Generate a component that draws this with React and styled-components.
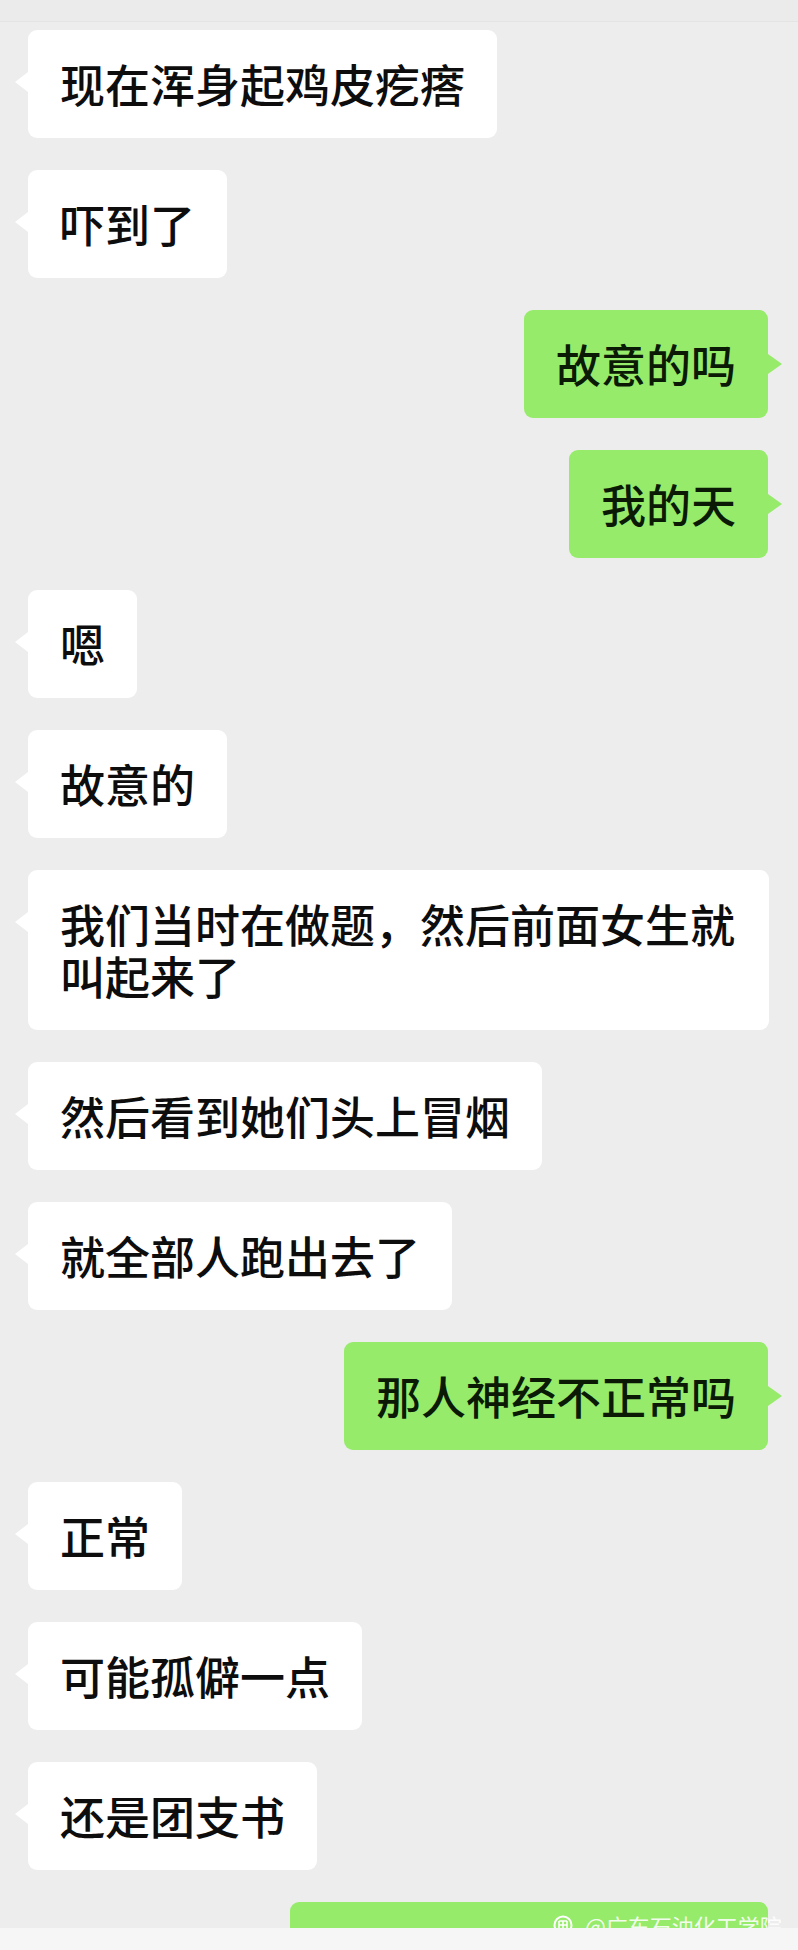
import React from "react"
import styled, { createGlobalStyle } from "styled-components"

const messages = [
  { from: "them", text: "现在浑身起鸡皮疙瘩" },
  { from: "them", text: "吓到了" },
  { from: "me", text: "故意的吗" },
  { from: "me", text: "我的天" },
  { from: "them", text: "嗯" },
  { from: "them", text: "故意的" },
  { from: "them", text: "我们当时在做题，然后前面女生就叫起来了" },
  { from: "them", text: "然后看到她们头上冒烟" },
  { from: "them", text: "就全部人跑出去了" },
  { from: "me", text: "那人神经不正常吗" },
  { from: "them", text: "正常" },
  { from: "them", text: "可能孤僻一点" },
  { from: "them", text: "还是团支书" },
]

const App = () => {
  return (
    <>
      <GlobalStyle />
      <Screen>
        <TopStrip />
        <ChatArea>
          {messages.map((m, i) => (
            <Row key={i} $me={m.from === "me"}>
              <Bubble $me={m.from === "me"}>{m.text}</Bubble>
            </Row>
          ))}
          <Row $me>
            <Bubble $me $width={478}>&nbsp;</Bubble>
          </Row>
          <Watermark>
            <WatermarkIcon width="20" height="20" viewBox="0 0 20 20">
              <rect x="1.5" y="1.5" width="17" height="17" rx="8.5" fill="none" stroke="#fff" strokeWidth="2" />
              <path d="M6 6h8M6 6v9M10 6v9M14 6v9M6 10h8" stroke="#fff" strokeWidth="1.6" fill="none" />
            </WatermarkIcon>
            <span>@广东石油化工学院</span>
          </Watermark>
        </ChatArea>
        <BottomBar />
      </Screen>
    </>
  )
}

export default App

const GlobalStyle = createGlobalStyle`
  html, body {
    margin: 0;
    padding: 0;
    background: #ededed;
  }
`

const Screen = styled.div`
  width: 798px;
  height: 1950px;
  display: flex;
  flex-direction: column;
  background: #ededed;
  font-family: "Noto Sans CJK SC", "Noto Sans", sans-serif;
  overflow: hidden;
`

const TopStrip = styled.div`
  flex: 0 0 21px;
  background: #ebebeb;
  border-bottom: 1px solid #e4e4e4;
`

const ChatArea = styled.div`
  position: relative;
  flex: 1;
  overflow: hidden;
  display: flex;
  flex-direction: column;
  gap: 32px;
  padding: 8px 30px 0 28px;
`

const Row = styled.div`
  display: flex;
  justify-content: ${p => (p.$me ? "flex-end" : "flex-start")};
`

const Bubble = styled.div`
  position: relative;
  box-sizing: border-box;
  max-width: 741px;
  width: ${p => (p.$width ? `${p.$width}px` : "auto")};
  flex-shrink: 0;
  padding: 28px 32px;
  border-radius: 9px;
  background: ${p => (p.$me ? "#96eb6b" : "#ffffff")};
  color: ${p => (p.$me ? "#0a1a05" : "#0d0d0d")};
  font-size: 45px;
  font-weight: 500;
  line-height: 52px;

  &::before {
    content: "";
    position: absolute;
    top: ${p => (p.$me ? "44px" : "42px")};
    ${p => (p.$me ? "right: -14px;" : "left: -13px;")}
    border-top: 10px solid transparent;
    border-bottom: 10px solid transparent;
    ${p =>
      p.$me
        ? "border-left: 14px solid #96eb6b;"
        : "border-right: 13px solid #ffffff;"}
  }
`

const Watermark = styled.div`
  position: absolute;
  left: 553px;
  bottom: -10px;
  display: flex;
  align-items: center;
  gap: 12px;
  white-space: nowrap;
  color: rgba(255, 255, 255, 0.9);
  font-size: 22px;
  line-height: 26px;
`

const WatermarkIcon = styled.svg`
  flex-shrink: 0;
`

const BottomBar = styled.div`
  position: relative;
  flex: 0 0 22px;
  background: #f6f6f6;
`
